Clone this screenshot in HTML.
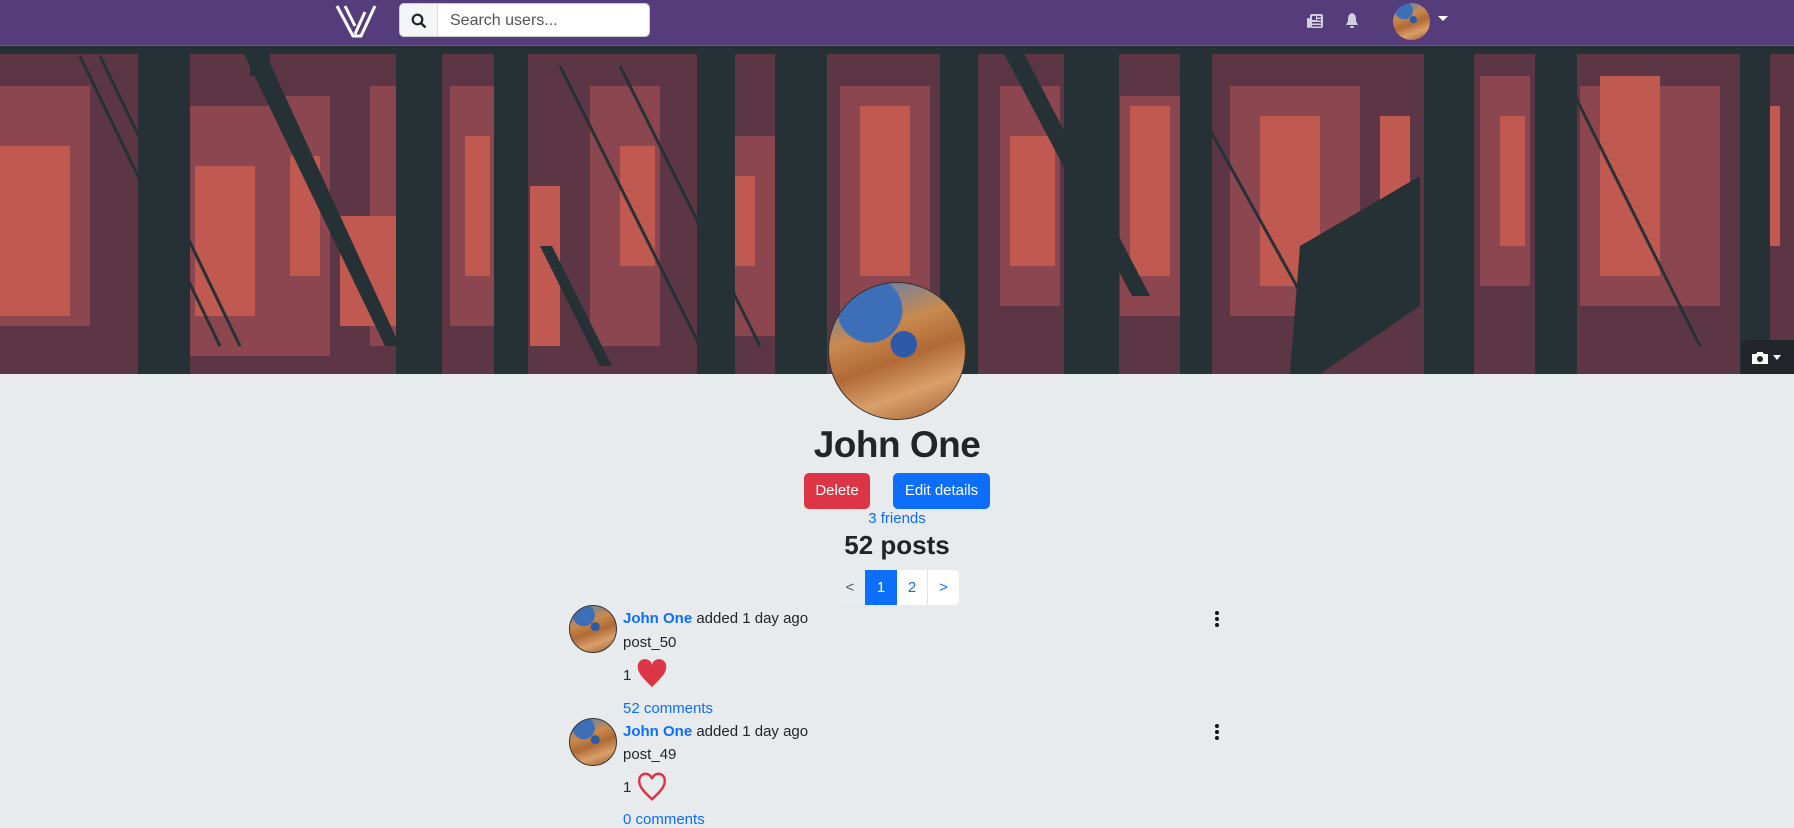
<!DOCTYPE html>
<html><head><meta charset="utf-8"><style>
*{box-sizing:border-box;margin:0;padding:0}
body{width:1794px;height:819px;overflow:hidden;background:#e8ebee;font-family:"Liberation Sans",sans-serif;color:#212529;position:relative}
.nav{position:absolute;left:0;top:0;width:1794px;height:46px;background:#553c7b;border-bottom:1px solid #6c5a86}
.search{position:absolute;left:399px;top:3px;width:251px;height:34px;border-radius:5px;background:#fff;border:1px solid #ccc;overflow:hidden}
.search .ic{position:absolute;left:0;top:0;width:38px;height:100%;background:#f4f5f7;border-right:1px solid #ddd}
.search span{position:absolute;left:50px;top:8px;font-size:16px;color:#555}
.banner{position:absolute;left:0;top:46px;width:1794px;height:328px;overflow:hidden;background:#5c3644}
.av{position:absolute;border-radius:50%;overflow:hidden;background:radial-gradient(circle at 30% 20%,#3c6fb8 0 22%,transparent 23%),radial-gradient(circle at 55% 45%,#2d5aa8 0 12%,transparent 13%),linear-gradient(160deg,#4b7cc4 0%,#c98a4e 35%,#b06a35 55%,#d9a06a 75%,#9c5b2e 100%)}
.c{position:absolute;left:0;width:1794px;text-align:center}
.btn{position:absolute;height:36px;border-radius:5px;color:#fff;font-size:15px;line-height:36px;text-align:center}
.pg{position:absolute;top:570px;height:35px;line-height:35px;text-align:center;font-size:15px;color:#0d6efd;background:#fff}
.blue{color:#0d6efd}
.t{position:absolute;font-size:15px}
.dots{position:absolute;width:4px}
.dots i{display:block;width:4px;height:4px;border-radius:50%;background:#111;margin-bottom:2px}
</style></head><body>
<div class="nav">
<svg style="position:absolute;left:335px;top:4px" width="42" height="34" viewBox="0 0 42 34"><path d="M2 2 L18 32 L26 32 L40 2 M10 2 L20 22 M30 8 L20 30" stroke="#fff" stroke-width="3" fill="none"/></svg>
<div class="search"><div class="ic"><svg style="position:absolute;left:11px;top:9px" width="16" height="16" viewBox="0 0 16 16"><circle cx="6.5" cy="6.5" r="4.8" stroke="#222" stroke-width="2.2" fill="none"/><path d="M10 10 L14.5 14.5" stroke="#222" stroke-width="2.4"/></svg></div><span>Search users...</span></div>
<svg style="position:absolute;left:1307px;top:14px" width="16" height="14" viewBox="0 0 16 14"><rect x="3" y="0" width="13" height="14" rx="2" fill="#d4cce0"/><rect x="0" y="4" width="3" height="10" rx="1" fill="#d4cce0"/><rect x="5" y="2" width="4" height="4" fill="#553c7b"/><rect x="10" y="2" width="4" height="1.5" fill="#553c7b"/><rect x="10" y="5" width="4" height="1.5" fill="#553c7b"/><rect x="5" y="8" width="9" height="1.5" fill="#553c7b"/><rect x="5" y="11" width="9" height="1.5" fill="#553c7b"/></svg>
<svg style="position:absolute;left:1345px;top:13px" width="14" height="16" viewBox="0 0 14 16"><path d="M7 0 C3 1 3 4 3 8 L1 12 L13 12 L11 8 C11 4 11 1 7 0Z" fill="#d4cce0"/><rect x="5" y="13" width="4" height="2" rx="1" fill="#d4cce0"/></svg>
<div class="av" style="left:1393px;top:3px;width:37px;height:37px"></div>
<svg style="position:absolute;left:1438px;top:16px" width="10" height="6"><path d="M0 0 L10 0 L5 5Z" fill="#fff"/></svg>
</div>
<div class="banner">
<svg width="1794" height="328" viewBox="0 0 1794 328">
<rect width="1794" height="328" fill="#5c3644"/>
<g fill="#8b4650">
<rect x="0" y="40" width="90" height="240"/><rect x="190" y="60" width="140" height="250"/><rect x="280" y="50" width="50" height="220"/><rect x="370" y="40" width="40" height="260"/><rect x="450" y="40" width="50" height="240"/><rect x="590" y="40" width="70" height="260"/><rect x="730" y="90" width="50" height="200"/><rect x="840" y="40" width="90" height="240"/><rect x="1000" y="40" width="60" height="220"/><rect x="1120" y="50" width="60" height="220"/><rect x="1230" y="40" width="130" height="230"/><rect x="1480" y="30" width="50" height="210"/><rect x="1580" y="40" width="140" height="220"/></g>
<g fill="#c0594f">
<rect x="0" y="100" width="70" height="170"/><rect x="195" y="120" width="60" height="150"/><rect x="290" y="110" width="30" height="120"/><rect x="340" y="170" width="60" height="110"/><rect x="465" y="90" width="25" height="140"/><rect x="530" y="140" width="30" height="160"/><rect x="620" y="100" width="35" height="120"/><rect x="735" y="130" width="20" height="90"/><rect x="860" y="60" width="50" height="170"/><rect x="1010" y="90" width="45" height="130"/><rect x="1130" y="60" width="40" height="170"/><rect x="1260" y="70" width="60" height="170"/><rect x="1380" y="70" width="30" height="180"/><rect x="1500" y="70" width="25" height="130"/><rect x="1600" y="30" width="60" height="200"/><rect x="1740" y="60" width="40" height="140"/></g>
<g fill="#263136">
<rect x="0" y="0" width="1794" height="8"/><rect x="138" y="0" width="52" height="328"/><rect x="250" y="0" width="20" height="30"/><rect x="396" y="0" width="46" height="328"/><rect x="494" y="0" width="34" height="328"/><rect x="697" y="0" width="38" height="328"/><rect x="775" y="0" width="52" height="328"/><rect x="940" y="0" width="38" height="328"/><rect x="1064" y="0" width="55" height="328"/><rect x="1180" y="0" width="32" height="328"/><rect x="1424" y="0" width="50" height="328"/><rect x="1535" y="0" width="42" height="328"/><rect x="1740" y="0" width="30" height="328"/>
<polygon points="240,0 262,0 400,300 385,300"/><polygon points="540,200 552,200 612,320 600,320"/><polygon points="1300,200 1420,130 1420,260 1320,328 1290,328"/><polygon points="1000,0 1020,0 1150,250 1132,250"/></g>
<g stroke="#263136" stroke-width="3"><path d="M80 10 L220 300 M100 10 L240 300 M560 20 L700 300 M620 20 L760 300 M1180 30 L1330 300 M1560 20 L1700 300"/></g>
</svg>
<div style="position:absolute;left:1741px;top:294px;width:60px;height:34px;background:#22262b;border-radius:6px 0 0 0">
<svg style="position:absolute;left:11px;top:11px" width="30" height="14" viewBox="0 0 30 14"><path d="M0 3 H4 L5.5 1 H10.5 L12 3 H16 V13 H0Z" fill="#fff"/><circle cx="8" cy="8" r="3" fill="#22262b"/><path d="M21 4 H29 L25 9Z" fill="#fff"/></svg></div>
</div>
<div class="av" style="left:828px;top:282px;width:138px;height:138px;border:1px solid #333"></div>
<div class="c" style="top:423px;font-size:37px;font-weight:bold;line-height:44px;letter-spacing:-0.5px">John One</div>
<div class="btn" style="left:804px;top:473px;width:66px;background:#dc3545">Delete</div>
<div class="btn" style="left:893px;top:473px;width:97px;background:#0d6efd">Edit details</div>
<div class="c blue" style="top:510px;font-size:15px">3 friends</div>
<div class="c" style="top:530px;font-size:26px;font-weight:bold">52 posts</div>
<div class="pg" style="left:835px;width:30px;background:#e9ecef;color:#555;border-radius:5px 0 0 5px">&lt;</div>
<div class="pg" style="left:865px;width:32px;background:#0d6efd;color:#fff">1</div>
<div class="pg" style="left:897px;width:31px;border-right:1px solid #e3e3e3">2</div>
<div class="pg" style="left:928px;width:31px;border-radius:0 5px 5px 0">&gt;</div>

<div class="av" style="left:569px;top:605px;width:48px;height:48px;border:1px solid #333"></div>
<div class="t" style="left:623px;top:610px"><b class="blue">John One</b> added 1 day ago</div>
<div class="t" style="left:623px;top:634px">post_50</div>
<div class="t" style="left:623px;top:667px">1</div>
<svg style="position:absolute;left:637px;top:659px" width="30" height="30" viewBox="0 0 16 16"><path d="M8 15 C3 10 0.5 7.5 0.5 4.8 A3.8 3.8 0 0 1 8 3 A3.8 3.8 0 0 1 15.5 4.8 C15.5 7.5 13 10 8 15Z" fill="#dc3545"/></svg>
<div class="t blue" style="left:623px;top:700px">52 comments</div>
<div class="dots" style="left:1215px;top:611px"><i></i><i></i><i></i></div>

<div class="av" style="left:569px;top:718px;width:48px;height:48px;border:1px solid #333"></div>
<div class="t" style="left:623px;top:723px"><b class="blue">John One</b> added 1 day ago</div>
<div class="t" style="left:623px;top:746px">post_49</div>
<div class="t" style="left:623px;top:779px">1</div>
<svg style="position:absolute;left:637px;top:772px" width="30" height="30" viewBox="0 0 16 16"><path d="M8 14.5 C3 10 1.2 7.5 1.2 5 A3.3 3.3 0 0 1 8 3.8 A3.3 3.3 0 0 1 14.8 5 C14.8 7.5 13 10 8 14.5Z" fill="none" stroke="#dc3545" stroke-width="1.3"/></svg>
<div class="t blue" style="left:623px;top:811px">0 comments</div>
<div class="dots" style="left:1215px;top:724px"><i></i><i></i><i></i></div>
</body></html>
